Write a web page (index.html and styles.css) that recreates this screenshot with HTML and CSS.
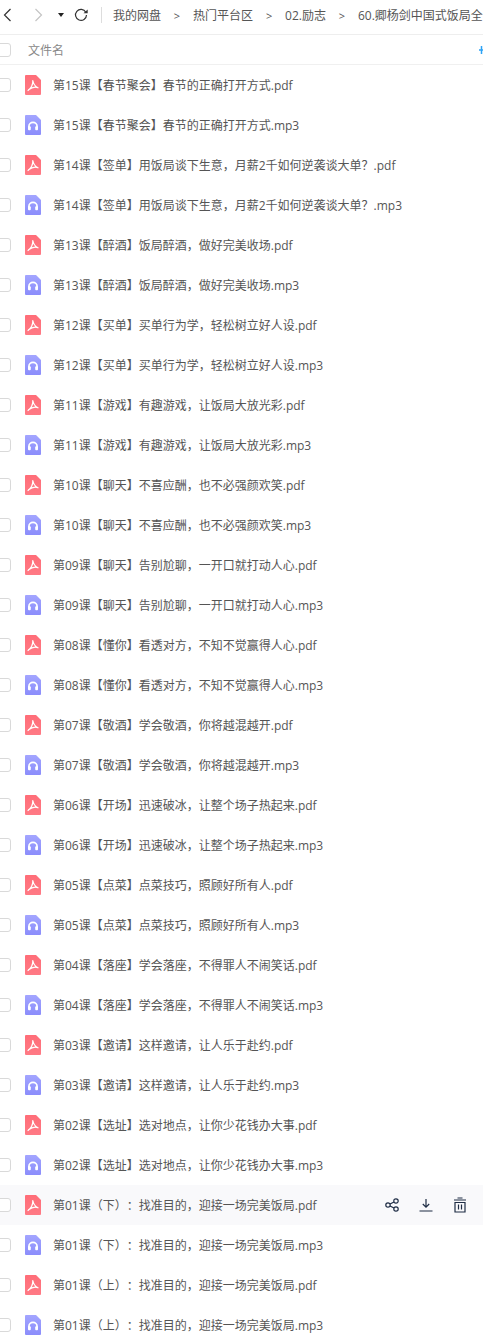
FILE: index.html
```html
<!DOCTYPE html>
<html lang="zh-CN">
<head>
<meta charset="utf-8">
<title>文件列表</title>
<link rel="stylesheet" href="styles.css">
</head>
<body>
<svg class="defs" width="0" height="0" aria-hidden="true">
  <defs>
    <linearGradient id="pdfFill" x1="0" y1="0" x2="0" y2="1"><stop offset="0" stop-color="#ff6d78"/><stop offset="1" stop-color="#ff7a85"/></linearGradient>
    <linearGradient id="mp3Fill" x1="0" y1="0" x2="0" y2="1"><stop offset="0" stop-color="#a3a5ff"/><stop offset="1" stop-color="#8b8dfb"/></linearGradient>
  </defs>
  <symbol id="pdf" viewBox="0 0 16 20">
    <path fill="url(#pdfFill)" d="M1 0h10l5 5v14a1 1 0 0 1-1 1H1a1 1 0 0 1-1-1V1a1 1 0 0 1 1-1z"/>
    <path fill="none" stroke="#fff" stroke-width="1.200" stroke-linecap="round" d="M7.800 5.500C8 9.500 6 13.200 3 15.500M3.500 14.800C7 12.200 10 11.300 13 12.800M7.800 5.500C8.500 9 10 11.500 13 12.800"/>
  </symbol>
  <symbol id="mp3" viewBox="0 0 16 20">
    <path fill="url(#mp3Fill)" d="M1 0h10l5 5v14a1 1 0 0 1-1 1H1a1 1 0 0 1-1-1V1a1 1 0 0 1 1-1z"/>
    <path fill="none" stroke="#fff" stroke-width="1.700" d="M3.900 13V11.500a4.100 4.100 0 0 1 8.200 0V13"/>
    <rect x="3" y="11.300" width="2.800" height="4" rx="1" fill="#fff"/>
    <rect x="10.200" y="11.300" width="2.800" height="4" rx="1" fill="#fff"/>
  </symbol>
</svg>

<nav class="toolbar">
  <div class="nav-icons">
    <svg class="ic-back" width="9" height="14" viewBox="0 0 9 14"><path d="M7.500 1 1.500 7l6 6" fill="none" stroke="#333" stroke-width="1.200"/></svg>
    <svg class="ic-forward" width="9" height="14" viewBox="0 0 9 14"><path d="M1.500 1l6 6-6 6" fill="none" stroke="#c4c4c4" stroke-width="1.200"/></svg>
    <span class="ic-caret"></span>
    <svg class="ic-refresh" width="14" height="14" viewBox="0 0 14 14"><path d="M11.800 4.200A5.500 5.500 0 1 0 12.500 7" fill="none" stroke="#333" stroke-width="1.200"/><path d="M9.500 5.200h4.200V1.500z" fill="#333"/></svg>
    <span class="divider"></span>
  </div>
  <div class="crumbs">
    <span>我的网盘</span><span class="sep">&gt;</span>
    <span>热门平台区</span><span class="sep">&gt;</span>
    <span>02.励志</span><span class="sep">&gt;</span>
    <span>60.卿杨剑中国式饭局全</span>
  </div>
</nav>

<header class="list-head">
  <span class="check"></span>
  <span class="head-name">文件名</span>
  <svg class="head-mark" width="4" height="10" viewBox="0 0 4 10"><path d="M2.500 1v8M0 5h4" stroke="#2ea3f5" stroke-width="1.500" fill="none"/></svg>
</header>

<main class="rows" id="rows"></main>

<script src="app.js"></script>
</body>
</html>
```

FILE: styles.css
```css
* { box-sizing: border-box; }
html, body { margin: 0; padding: 0; height: 1335px; overflow: hidden; background: #fff; }
body { font: 12px/20px "Open Sans", "Noto Sans CJK SC", "Liberation Sans", sans-serif; color: #555555; width: 483px; text-spacing-trim: space-all; }
.defs { display: block; height: 0; }

.toolbar { display: flex; align-items: center; height: 35px; border-bottom: 1px solid #eeeeee; white-space: nowrap; overflow: hidden; padding-bottom: 4px; }
.nav-icons { display: flex; align-items: center; flex: none; width: 113px; padding-left: 3px; }
.ic-forward { margin-left: 22px; }
.ic-caret { width: 0; height: 0; margin-left: 15px; border: 3.500px solid transparent; border-top: 4px solid #222; border-bottom: 0; }
.ic-refresh { margin-left: 10px; }
.divider { width: 1px; height: 16px; background: #dddddd; margin-left: 13px; }
.crumbs { display: flex; flex: none; color: #555555; padding-top: 2px; }
.sep { width: 32px; text-align: center; font-size: 11px; }

.list-head { display: flex; align-items: center; height: 30px; border-bottom: 1px solid #f0f0f0; position: relative; }
.check { flex: none; width: 14px; height: 14px; margin-left: -3px; border: 1px solid #d9d9d9; border-radius: 3px; background: #fff; }
.head-name { margin-left: 17px; color: #888888; padding-top: 2px; }
.head-mark { position: absolute; right: 0; top: 10px; }

.rows { display: flex; flex-direction: column; }
.row { display: flex; align-items: center; height: 40px; flex: none; }
.row.hover { background: #f9f9fb; }
.file-icon { flex: none; width: 16px; height: 20px; margin-left: 14px; }
.name { margin-left: 12px; color: #555555; white-space: nowrap; padding-top: 2px; }
.actions { display: flex; align-items: center; margin-left: auto; margin-right: 16px; gap: 20px; }
```

FILE: app.js
```js
var lessons = [
  "第15课【春节聚会】春节的正确打开方式",
  "第14课【签单】用饭局谈下生意，月薪2千如何逆袭谈大单？",
  "第13课【醉酒】饭局醉酒，做好完美收场",
  "第12课【买单】买单行为学，轻松树立好人设",
  "第11课【游戏】有趣游戏，让饭局大放光彩",
  "第10课【聊天】不喜应酬，也不必强颜欢笑",
  "第09课【聊天】告别尬聊，一开口就打动人心",
  "第08课【懂你】看透对方，不知不觉赢得人心",
  "第07课【敬酒】学会敬酒，你将越混越开",
  "第06课【开场】迅速破冰，让整个场子热起来",
  "第05课【点菜】点菜技巧，照顾好所有人",
  "第04课【落座】学会落座，不得罪人不闹笑话",
  "第03课【邀请】这样邀请，让人乐于赴约",
  "第02课【选址】选对地点，让你少花钱办大事",
  "第01课（下）：找准目的，迎接一场完美饭局",
  "第01课（上）：找准目的，迎接一场完美饭局"
];
var actions =
  '<div class="actions">' +
  '<svg width="14" height="14" viewBox="0 0 14 14" fill="none" stroke="#1f2d45" stroke-width="1.200"><circle cx="3" cy="7" r="2.200"/><circle cx="11" cy="3" r="2.200"/><circle cx="11" cy="11" r="2.200"/><path d="M5 6l4-2M5 8l4 2"/></svg>' +
  '<svg width="14" height="14" viewBox="0 0 14 14" fill="none" stroke="#1f2d45" stroke-width="1.200"><path d="M7 1v8M3.800 6 7 9.200 10.200 6M.5 13h13"/></svg>' +
  '<svg width="14" height="16" viewBox="0 0 14 16" fill="none" stroke="#1f2d45" stroke-width="1.200"><path d="M1 3h12M4.500 1h5M2 5.500h10V15H2zM5.500 7.500v5M8.500 7.500v5"/></svg>' +
  '</div>';
var html = "";
lessons.forEach(function (title) {
  ["pdf", "mp3"].forEach(function (ext) {
    var hover = title.indexOf("（下）") > -1 && ext === "pdf";
    html += '<div class="row' + (hover ? " hover" : "") + '">' +
      '<span class="check"></span>' +
      '<svg class="file-icon"><use href="#' + ext + '"/></svg>' +
      '<span class="name">' + title + "." + ext + "</span>" +
      (hover ? actions : "") + "</div>";
  });
});
document.getElementById("rows").innerHTML = html;
```
